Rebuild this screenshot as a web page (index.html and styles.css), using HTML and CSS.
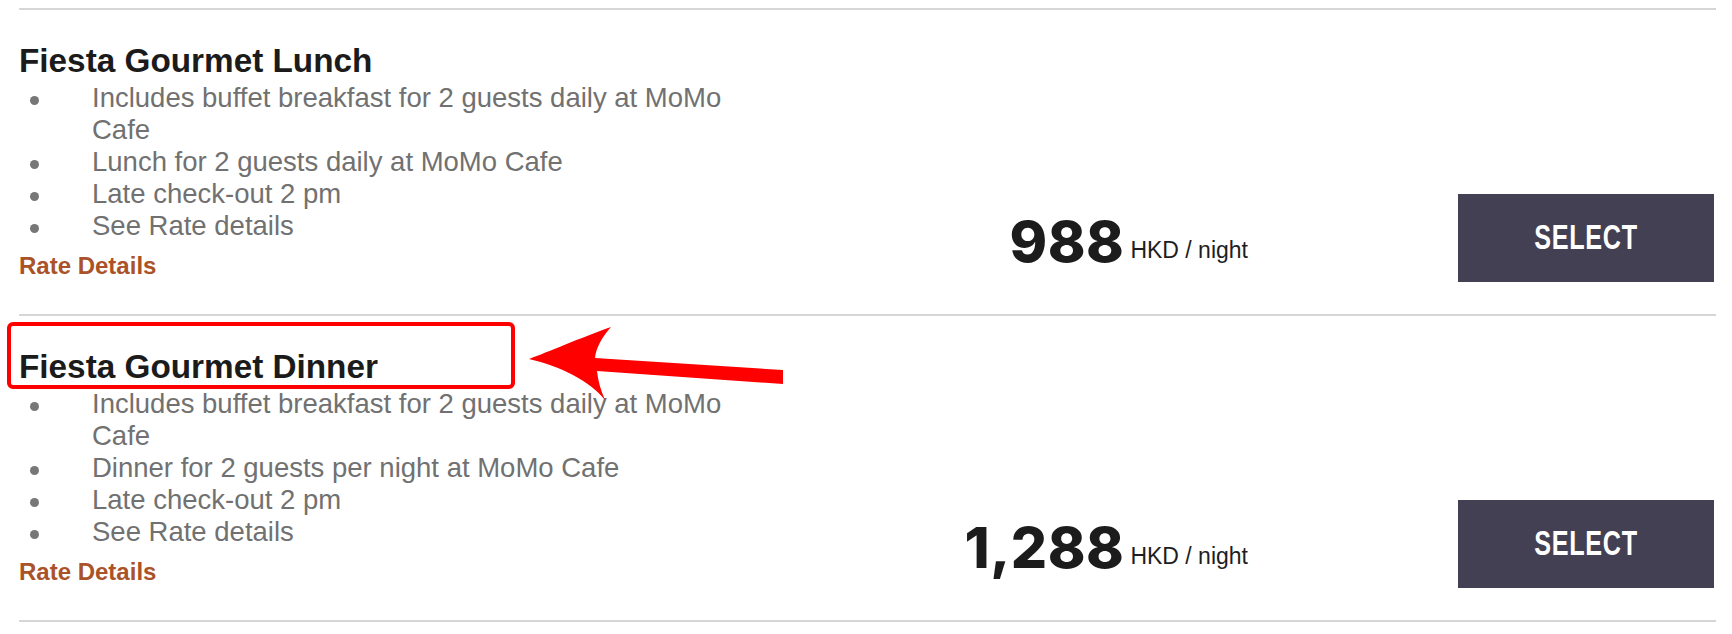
FILE: index.html
```html
<!DOCTYPE html>
<html lang="en">
<head>
<meta charset="utf-8">
<title>Rates</title>
<link rel="stylesheet" href="styles.css">
</head>
<body>
<div class="page">
  <div class="rates">
    <div class="rate">
      <div class="info">
        <h2 class="title">Fiesta Gourmet Lunch</h2>
        <ul class="perks">
          <li>Includes buffet breakfast for 2 guests daily at MoMo Cafe</li>
          <li>Lunch for 2 guests daily at MoMo Cafe</li>
          <li>Late check-out 2 pm</li>
          <li>See Rate details</li>
        </ul>
        <a class="details" href="#">Rate Details</a>
      </div>
      <div class="price"><span class="amount">988</span><span class="unit">HKD / night</span></div>
      <button class="select"><span class="select-label">SELECT</span></button>
    </div>
    <div class="rate">
      <div class="info">
        <h2 class="title">Fiesta Gourmet Dinner</h2>
        <ul class="perks">
          <li>Includes buffet breakfast for 2 guests daily at MoMo Cafe</li>
          <li>Dinner for 2 guests per night at MoMo Cafe</li>
          <li>Late check-out 2 pm</li>
          <li>See Rate details</li>
        </ul>
        <a class="details" href="#">Rate Details</a>
      </div>
      <div class="price"><span class="amount">1,288</span><span class="unit">HKD / night</span></div>
      <button class="select"><span class="select-label">SELECT</span></button>
    </div>
  </div>
  <div class="highlight"></div>
  <svg class="arrow" width="1732" height="634" viewBox="0 0 1732 634" aria-hidden="true">
    <path d="M529,359 C548,352 580,338 611,327 C602,337 596,348 595,358 L783,370 L783,384 L597,371 C598,381 601,391 605,400 C590,381 560,366 529,359 Z" fill="#ff0000"/>
  </svg>
</div>
</body>
</html>
```

FILE: styles.css
```css
html, body {
  margin: 0;
  padding: 0;
  background: #ffffff;
}

.page {
  position: relative;
  width: 1732px;
  height: 634px;
  overflow: hidden;
  padding-top: 8px;
  box-sizing: border-box;
}

.rates {
  margin-left: 19px;
  width: 1697px;
  border-top: 2px solid #d6d6d6;
}

.rate {
  display: flex;
  align-items: flex-start;
  height: 304px;
  border-bottom: 2px solid #d6d6d6;
}

.info {
  width: 733px;
  flex: none;
  padding-top: 32px;
}

.title {
  margin: 0 0 3px 0;
  font-family: "Liberation Sans", Arial, sans-serif;
  font-weight: 700;
  font-size: 33.3px;
  line-height: 37px;
  color: #1b1b1b;
}

.perks {
  list-style: none;
  margin: 0;
  padding: 0;
  font-family: "Liberation Sans", Arial, sans-serif;
  font-size: 27.5px;
  line-height: 32px;
  color: #717171;
}

.perks li {
  display: grid;
  grid-template-columns: 73px 660px;
}

.perks li::before {
  content: "";
  width: 9px;
  height: 9px;
  margin: 14px 0 0 11px;
  border-radius: 50%;
  background: #777777;
}

.details {
  display: block;
  margin-top: 10px;
  font-family: "Liberation Sans", Arial, sans-serif;
  font-weight: 700;
  font-size: 24px;
  line-height: 28px;
  color: #aa5228;
  text-decoration: none;
}

.price {
  flex: 1;
  margin-top: 203px;
  text-align: right;
  white-space: nowrap;
}

.amount {
  font-family: Inter, "Liberation Sans", sans-serif;
  font-weight: 800;
  font-size: 57px;
  line-height: 57px;
  letter-spacing: 0.5px;
  color: #1c1c1c;
}

.unit {
  margin-left: 6px;
  vertical-align: 4px;
  font-family: "Liberation Sans", Arial, sans-serif;
  font-size: 23px;
  color: #1e1e1e;
}

.select {
  flex: none;
  width: 256px;
  height: 88px;
  margin: 184px 2px 0 210px;
  padding: 0 0 4px 0;
  border: 0;
  background: #444054;
  display: flex;
  align-items: center;
  justify-content: center;
  cursor: pointer;
}

.select-label {
  display: inline-block;
  font-family: "Liberation Sans", Arial, sans-serif;
  font-weight: 700;
  font-size: 35px;
  line-height: 35px;
  letter-spacing: 1px;
  color: #ffffff;
  transform: scaleX(0.72);
}

.highlight {
  position: absolute;
  left: 7px;
  top: 322px;
  width: 508px;
  height: 67px;
  box-sizing: border-box;
  border: 4px solid #ff0000;
  border-radius: 6px;
}

.arrow {
  position: absolute;
  left: 0;
  top: 0;
}
```
